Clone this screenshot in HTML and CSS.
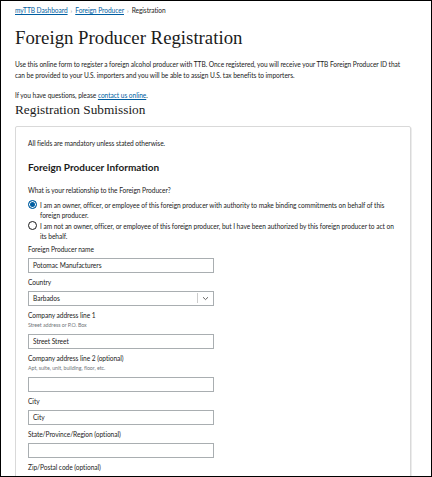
FILE: index.html
```html
<!DOCTYPE html>
<html>
<head>
<meta charset="utf-8">
<link rel="stylesheet" href="styles.css">
</head>
<body>
<div class="frame">
  <nav class="crumbs">
    <a href="#">myTTB Dashboard</a><span class="sep">›</span><a href="#">Foreign Producer</a><span class="sep">›</span><span>Registration</span>
  </nav>
  <h1 class="title">Foreign Producer Registration</h1>
  <p class="intro">Use this online form to register a foreign alcohol producer with TTB. Once registered, you will receive your TTB Foreign Producer ID that can be provided to your U.S. importers and you will be able to assign U.S. tax benefits to importers.</p>
  <p class="intro q">If you have questions, please <a href="#">contact us online</a>.</p>
  <h2 class="sub">Registration Submission</h2>
  <div class="card">
    <p class="note">All fields are mandatory unless stated otherwise.</p>
    <h3 class="sect">Foreign Producer Information</h3>
    <p class="label rel">What is your relationship to the Foreign Producer?</p>
    <div class="radio">
      <span class="dot checked"></span>
      <span class="rtext">I am an owner, officer, or employee of this foreign producer with authority to make binding commitments on behalf of this foreign producer.</span>
    </div>
    <div class="radio">
      <span class="dot"></span>
      <span class="rtext">I am not an owner, officer, or employee of this foreign producer, but I have been authorized by this foreign producer to act on its behalf.</span>
    </div>
    <div class="field first">
      <div class="label">Foreign Producer name</div>
      <div class="input">Potomac Manufacturers</div>
    </div>
    <div class="field">
      <div class="label">Country</div>
      <div class="input select"><span class="val">Barbados</span><span class="divider"></span><svg class="chev" width="7" height="5" viewBox="0 0 7 5"><path d="M1 1.2 L3.5 3.6 L6 1.2" fill="none" stroke="#555" stroke-width="0.9"/></svg></div>
    </div>
    <div class="field">
      <div class="label">Company address line 1</div>
      <div class="hint">Street address or P.O. Box</div>
      <div class="input">Street Street</div>
    </div>
    <div class="field">
      <div class="label">Company address line 2 (optional)</div>
      <div class="hint">Apt, suite, unit, building, floor, etc.</div>
      <div class="input"></div>
    </div>
    <div class="field">
      <div class="label">City</div>
      <div class="input">City</div>
    </div>
    <div class="field">
      <div class="label">State/Province/Region (optional)</div>
      <div class="input"></div>
    </div>
    <div class="field">
      <div class="label">Zip/Postal code (optional)</div>
      <div class="input"></div>
    </div>
  </div>
</div>
</body>
</html>
```
FILE: styles.css
```css
html, body { margin: 0; padding: 0; background: #fff; }
.frame {
  box-sizing: border-box;
  width: 432px;
  height: 477px;
  border: 1px solid #000;
  overflow: hidden;
  padding: 4px 20px 0 14px;
  font-family: Lato, "Open Sans", sans-serif;
  color: #1b1b1b;
}
a { color: #005ea2; text-decoration: underline; }
.crumbs { font-size: 6.6px; line-height: 10px; color: #1b1b1b; letter-spacing: -0.05px; }
.crumbs .sep { color: #888; margin: 0 3px; font-size: 6px; }
.title {
  font-family: "Liberation Serif", serif;
  font-weight: normal;
  font-size: 18.8px;
  line-height: 22px;
  margin: 11px 0 10px;
}
.intro { font-size: 6.6px; line-height: 10.5px; margin: 0; padding-right: 5px; letter-spacing: -0.05px; }
.intro.q { margin-top: 10px; }
.sub {
  font-family: "Liberation Serif", serif;
  font-weight: normal;
  font-size: 13.3px;
  line-height: 16px;
  margin: 1px 0 8px;
}
.card {
  border: 1px solid #d9d9d9;
  box-shadow: 1px 1px 0 #ececec;
  border-radius: 2px;
  width: 396px;
  box-sizing: border-box;
  padding: 12px 12px 20px;
  letter-spacing: -0.05px;
}
.note { font-size: 6.6px; line-height: 9px; margin: 0; }
.sect { font-size: 10px; font-weight: bold; margin: 13px 0 12px; line-height: 13px; letter-spacing: 0; }
.label { font-size: 6.6px; line-height: 9px; }
.rel { margin: 0 0 5px; }
.radio { display: flex; gap: 3px; font-size: 6.6px; line-height: 10px; margin-bottom: 1px; }
.dot {
  flex: none;
  width: 9px; height: 9px;
  box-sizing: border-box;
  border: 1px solid #1b1b1b;
  border-radius: 50%;
  margin-top: 0.5px;
}
.dot.checked {
  background: #005ea2;
  border: 1px solid #005ea2;
  box-shadow: inset 0 0 0 1px #fff;
}
.field { margin-top: 5px; }
.field.first { margin-top: 4px; }
.field .label { margin-bottom: 4px; }
.hint { font-size: 5.3px; line-height: 7px; color: #71767a; margin: -2px 0 5px; }
.input {
  box-sizing: border-box;
  width: 186px; height: 15px;
  border: 1px solid #a9aeb1;
  font-size: 6.6px; line-height: 13px;
  padding: 0 4px;
}
.select { display: flex; align-items: center; }
.select .val { flex: 1; }
.select .divider { width: 1px; height: 10px; background: #ccc; margin-right: 4px; }
.chev { display: block; }
```
